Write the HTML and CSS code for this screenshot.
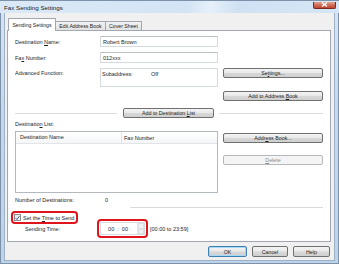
FILE: index.html
```html
<!DOCTYPE html>
<html lang="en">
<head>
    <meta charset="UTF-8">
    <title>Fax Sending Settings</title>
    <link rel="stylesheet" href="styles.css">
</head>
<body>

<div class="window">
    <!-- Barra de título -->
    <div class="titlebar">
        <span class="title">Fax Sending Settings</span>
        <span class="close">
            <svg width="7" height="5" viewBox="0 0 7 5"><path d="M1 0.5 L6 4.5 M6 0.5 L1 4.5" stroke="#fff" stroke-width="1.3"/></svg>
        </span>
    </div>

    <div class="client">
        <!-- Abas -->
        <div class="tabs">
            <div class="tab active">Sending Settings</div>
            <div class="tab tab-eab">Edit Address Book</div>
            <div class="tab tab-cs">Cover Sheet</div>
        </div>

        <div class="panel">
            <div class="row">
                <span class="lbl">Destination <u>N</u>ame:</span>
                <div class="field">Robert Brown</div>
            </div>
            <div class="row">
                <span class="lbl">Fa<u>x</u> Number:</span>
                <div class="field">012xxx</div>
            </div>

            <div class="row row-adv">
                <span class="lbl lbl-top">Advanced Function:</span>
                <div class="adv-box">
                    <span class="sub">Subaddress:</span>
                    <span>Off</span>
                </div>
                <div class="btn-col">
                    <button class="btn"><span>Se<u>t</u>tings...</span></button>
                    <button class="btn"><span>Add to Address <u>B</u>ook</span></button>
                </div>
            </div>

            <div class="row row-sep">
                <div class="line line-left"></div>
                <button class="btn btn-add"><span>Add to Destination <u>L</u>ist</span></button>
                <div class="line line-right"></div>
            </div>

            <div class="list-label">Destinatio<u>n</u> List:</div>

            <div class="row row-list">
                <div class="list">
                    <div class="list-head">
                        <span class="col-name">Destination Name</span>
                        <span class="col-fax">Fax Number</span>
                    </div>
                </div>
                <div class="btn-col btn-col-list">
                    <button class="btn"><span>Addr<u>e</u>ss Book...</span></button>
                    <button class="btn" disabled><span><u>D</u>elete</span></button>
                </div>
            </div>

            <div class="row row-count">
                <span class="lbl lbl-count">Number of Destinations:</span>
                <span>0</span>
            </div>
            <div class="line line-bottom"></div>

            <div class="row row-check">
                <label class="check-label">
                    <span class="checkbox">
                        <svg width="6" height="6" viewBox="0 0 6 6"><path d="M0.8 3.2 L2.4 4.8 L5.3 0.8" fill="none" stroke="#2a4a7a" stroke-width="1.1"/></svg>
                    </span>
                    <span>Set the <u>T</u>ime to Send</span>
                </label>
            </div>

            <div class="row row-time">
                <span class="lbl lbl-time">Sending Time:</span>
                <div class="time-field">
                    <span class="time-text">00 &nbsp;:&nbsp; 00</span>
                    <span class="spin">
                        <span class="spin-up"></span>
                        <span class="spin-down"></span>
                    </span>
                </div>
                <span class="range">[00:00 to 23:59]</span>
            </div>
        </div>

        <!-- Botões do rodapé -->
        <div class="footer">
            <button class="btn btn-ok">OK</button>
            <button class="btn btn-cancel">Cancel</button>
            <button class="btn btn-help">Help</button>
        </div>
    </div>
</div>

</body>
</html>
```

FILE: styles.css
```css
body {
    margin: 0;
    padding: 0;
    font-family: "Liberation Sans", Arial, sans-serif;
    font-size: 5.5px;
    color: #1e1e1e;
    background-color: #fff;
}
u {
    text-decoration-thickness: 0.5px;
}
.window {
    width: 339px;
    height: 264px;
    box-sizing: border-box;
    background: linear-gradient(to bottom, #d7e6f6, #c4d9ef 40%, #bcd3ec);
    box-shadow: inset 0 0 0 1px #7d91a8;
    display: flex;
    flex-direction: column;
}
.titlebar {
    height: 12px;
    display: flex;
    align-items: center;
    justify-content: space-between;
    padding: 0 3px 0 4px;
    background: linear-gradient(100deg, #dbe9f7 0%, #d3e4f5 55%, #e6f0fa 62%, #cfe1f3 70%, #d6e6f6 100%);
    border-top: 1px solid #7d91a8;
}
.title {
    font-size: 6.2px;
    color: #222;
    margin-top: 1px;
}
.close {
    width: 23px;
    height: 7px;
    margin-top: -4px;
    box-sizing: border-box;
    border: 1px solid #7a2a1e;
    border-top: none;
    border-radius: 0 0 2px 2px;
    background: linear-gradient(to bottom, #e2a394, #d0705c 50%, #c0432d);
    display: flex;
    align-items: center;
    justify-content: center;
}
.client {
    flex: 1;
    margin: 0 4px 3px 4px;
    background-color: #f0f0f0;
    border: 1px solid #9fb0c4;
    border-top: none;
    display: flex;
    flex-direction: column;
}
.tabs {
    height: 17px;
    display: flex;
    align-items: flex-end;
    padding-left: 3px;
}
.tab {
    height: 9px;
    box-sizing: border-box;
    border: 1px solid #a0a7b0;
    border-bottom: none;
    border-radius: 1px 1px 0 0;
    background: linear-gradient(to bottom, #f2f2f2, #e3e3e3);
    display: flex;
    align-items: center;
    justify-content: center;
    font-size: 5.2px;
    margin-left: -1px;
}
.tab.active {
    width: 48px;
    height: 13px;
    margin-bottom: -1px;
    margin-left: 0;
    background: #fff;
    position: relative;
    z-index: 1;
    padding-bottom: 1px;
}
.tab-eab {
    width: 51px;
}
.tab-cs {
    width: 37px;
}
.panel {
    margin-left: 2px;
    width: 324px;
    height: 212px;
    box-sizing: border-box;
    background: #fff;
    border: 1px solid #a0a7b0;
    padding: 5px 7px 0 7px;
}
.row {
    display: flex;
    align-items: center;
}
.row + .row {
    margin-top: 5px;
}
.lbl {
    width: 85px;
    flex-shrink: 0;
}
.lbl-top {
    align-self: flex-start;
    line-height: 10px;
}
.field {
    width: 118px;
    height: 11px;
    box-sizing: border-box;
    border: 1px solid #d5dadf;
    border-top-color: #b9bec4;
    padding: 0 2px;
    display: flex;
    align-items: center;
}
.row-adv {
    align-items: flex-start;
}
.adv-box {
    width: 118px;
    height: 19px;
    box-sizing: border-box;
    border: 1px solid #d5dadf;
    padding: 2px 1px;
    display: flex;
    align-items: flex-start;
}
.sub {
    width: 49px;
}
.btn-col {
    display: flex;
    flex-direction: column;
    gap: 13px;
    margin-left: 5px;
}
.btn {
    width: 100px;
    height: 10px;
    box-sizing: border-box;
    padding: 0;
    font-family: inherit;
    font-size: 5.3px;
    color: #1e1e1e;
    border: 1px solid #707070;
    border-radius: 2px;
    background: linear-gradient(to bottom, #f4f4f4 0%, #e8e8e8 48%, #d8d8d8 52%, #cfcfcf 100%);
    display: flex;
    align-items: center;
    justify-content: center;
    cursor: pointer;
}
.btn:disabled {
    border-color: #b5b9bd;
    background: #f4f4f4;
    color: #8a8a8a;
}
.line {
    height: 1px;
    background-color: #d8dcdf;
}
.row-sep {
    margin-top: 7px !important;
}
.line-left {
    width: 102px;
    margin-right: 6px;
}
.btn-add {
    width: 91px;
}
.line-right {
    flex: 1;
    margin-left: 5px;
}
.list-label {
    height: 9px;
    line-height: 9px;
    margin: 2px 0 2px 0;
}
.row-list {
    margin-top: 0 !important;
    align-items: flex-start;
}
.list {
    width: 203px;
    height: 62px;
    box-sizing: border-box;
    border: 1px solid #b4b9bf;
}
.list-head {
    height: 12px;
    box-sizing: border-box;
    border-bottom: 1px solid #e2e5e8;
    background: linear-gradient(to bottom, #ffffff, #f5f6f7);
    display: flex;
    align-items: center;
}
.col-name {
    width: 101px;
    padding-left: 4px;
    border-right: 1px solid #e2e5e8;
    height: 11px;
    line-height: 11px;
}
.col-fax {
    padding-left: 2px;
}
.btn-col-list {
    margin-top: 2px;
    gap: 12px;
}
.row-count {
    margin-top: 2px !important;
    height: 10px;
}
.lbl-count {
    width: 90px;
}
.line-bottom {
    margin: 2px 0 0 115px;
}
.row-check {
    margin-top: 5px !important;
    height: 9px;
}
.check-label {
    margin-left: -2px;
    height: 9px;
    padding: 0 2px 0 1px;
    display: flex;
    align-items: center;
    gap: 2px;
    outline: 2px solid #e0141c;
    border-radius: 2px;
}
.checkbox {
    width: 7px;
    height: 7px;
    box-sizing: border-box;
    border: 1px solid #8e8f8f;
    background: linear-gradient(to bottom right, #e6e6e6, #fdfdfd);
    display: flex;
    align-items: center;
    justify-content: center;
}
.row-time {
    margin-top: 0 !important;
}
.lbl-time {
    width: 75px;
    padding-left: 10px;
}
.time-field {
    width: 45px;
    height: 13px;
    box-sizing: border-box;
    border: 1px solid #d5dadf;
    display: flex;
    align-items: center;
    justify-content: flex-end;
    outline: 2px solid #e0141c;
    outline-offset: 1px;
    border-radius: 1px;
}
.time-text {
    margin-right: 9px;
}
.spin {
    width: 6px;
    height: 11px;
    display: flex;
    flex-direction: column;
    border-left: 1px solid #e4e7ea;
}
.spin-up, .spin-down {
    flex: 1;
    background: #eef0f2;
    border: 1px solid #dde0e3;
}
.range {
    margin-left: 5px;
}
.footer {
    margin-top: 4px;
    display: flex;
    justify-content: flex-end;
    gap: 5px;
    padding-right: 4px;
}
.footer .btn {
    height: 11px;
}
.btn-ok {
    width: 39px !important;
    border-color: #3c7fb1 !important;
    box-shadow: inset 0 0 0 1px #a7d8f5;
}
.btn-cancel {
    width: 36px !important;
}
.btn-help {
    width: 37px !important;
}
```
